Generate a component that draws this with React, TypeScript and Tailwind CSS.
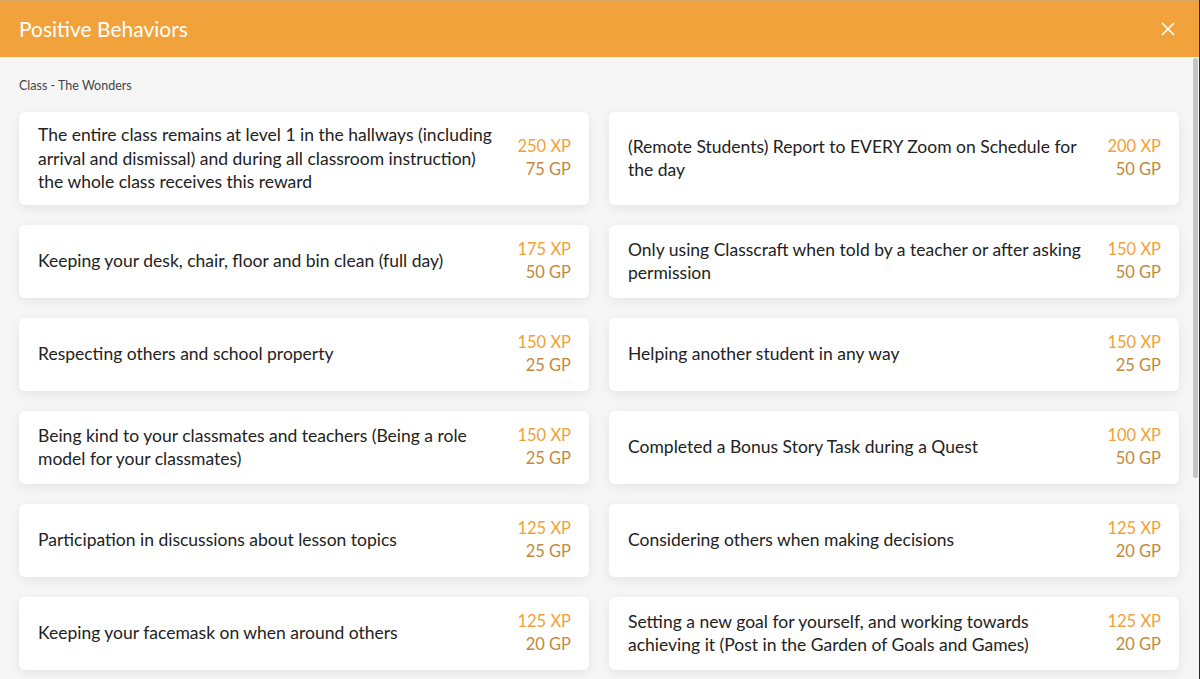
import { X } from "lucide-react";

interface Behavior {
    text: string;
    xp: number;
    gp: number;
}

const behaviors: Behavior[] = [
    { text: "The entire class remains at level 1 in the hallways (including arrival and dismissal) and during all classroom instruction) the whole class receives this reward", xp: 250, gp: 75 },
    { text: "(Remote Students) Report to EVERY Zoom on Schedule for the day", xp: 200, gp: 50 },
    { text: "Keeping your desk, chair, floor and bin clean (full day)", xp: 175, gp: 50 },
    { text: "Only using Classcraft when told by a teacher or after asking permission", xp: 150, gp: 50 },
    { text: "Respecting others and school property", xp: 150, gp: 25 },
    { text: "Helping another student in any way", xp: 150, gp: 25 },
    { text: "Being kind to your classmates and teachers (Being a role model for your classmates)", xp: 150, gp: 25 },
    { text: "Completed a Bonus Story Task during a Quest", xp: 100, gp: 50 },
    { text: "Participation in discussions about lesson topics", xp: 125, gp: 25 },
    { text: "Considering others when making decisions", xp: 125, gp: 20 },
    { text: "Keeping your facemask on when around others", xp: 125, gp: 20 },
    { text: "Setting a new goal for yourself, and working towards achieving it (Post in the Garden of Goals and Games)", xp: 125, gp: 20 },
];

function BehaviorCard({ behavior }: { behavior: Behavior }) {
    return (
        <div className="flex items-center justify-between rounded-[6px] bg-white pl-[19px] pr-[18px] py-[11px] min-h-[73px] shadow-[0_3px_12px_rgba(0,0,0,0.08)]">
            <div className="flex-1 pr-[22px] text-[17.5px] leading-[23.5px] text-[#222222]">{behavior.text}</div>
            <div className="flex flex-col items-end text-[16.5px] leading-[23.5px] whitespace-nowrap">
                <span className="text-[#f0a138]">{behavior.xp} XP</span>
                <span className="text-[#c2883c]">{behavior.gp} GP</span>
            </div>
        </div>
    );
}

export default function App() {
    return (
        <div className="relative flex h-[679px] w-[1200px] flex-col overflow-hidden bg-[#f6f6f6] font-['Lato','Open_Sans',sans-serif]">
            <div className="flex h-[57px] shrink-0 items-center justify-between border-t border-[#d9a865] bg-[#f2a23a] pl-[19px] pr-[21px]">
                <h1 className="text-[21px] text-white">Positive Behaviors</h1>
                <X className="h-[22px] w-[22px] text-white" strokeWidth={1.8} />
            </div>
            <div className="flex-1 overflow-hidden pl-[19px] pr-[21px] pt-[21px]">
                <div className="text-[12.5px] leading-[16px] text-[#444444]">Class - The Wonders</div>
                <div className="mt-[18px] grid grid-cols-2 gap-x-[20px] gap-y-[20px]">
                    {behaviors.map((b, i) => (
                        <BehaviorCard key={i} behavior={b} />
                    ))}
                </div>
            </div>
            <div className="absolute right-[2px] top-[58px] h-[420px] w-[5px] rounded-full bg-[#c4c4c4]" />
            <div className="absolute right-0 top-0 h-full w-[1px] bg-[#2a2a2a]" />
        </div>
    );
}
